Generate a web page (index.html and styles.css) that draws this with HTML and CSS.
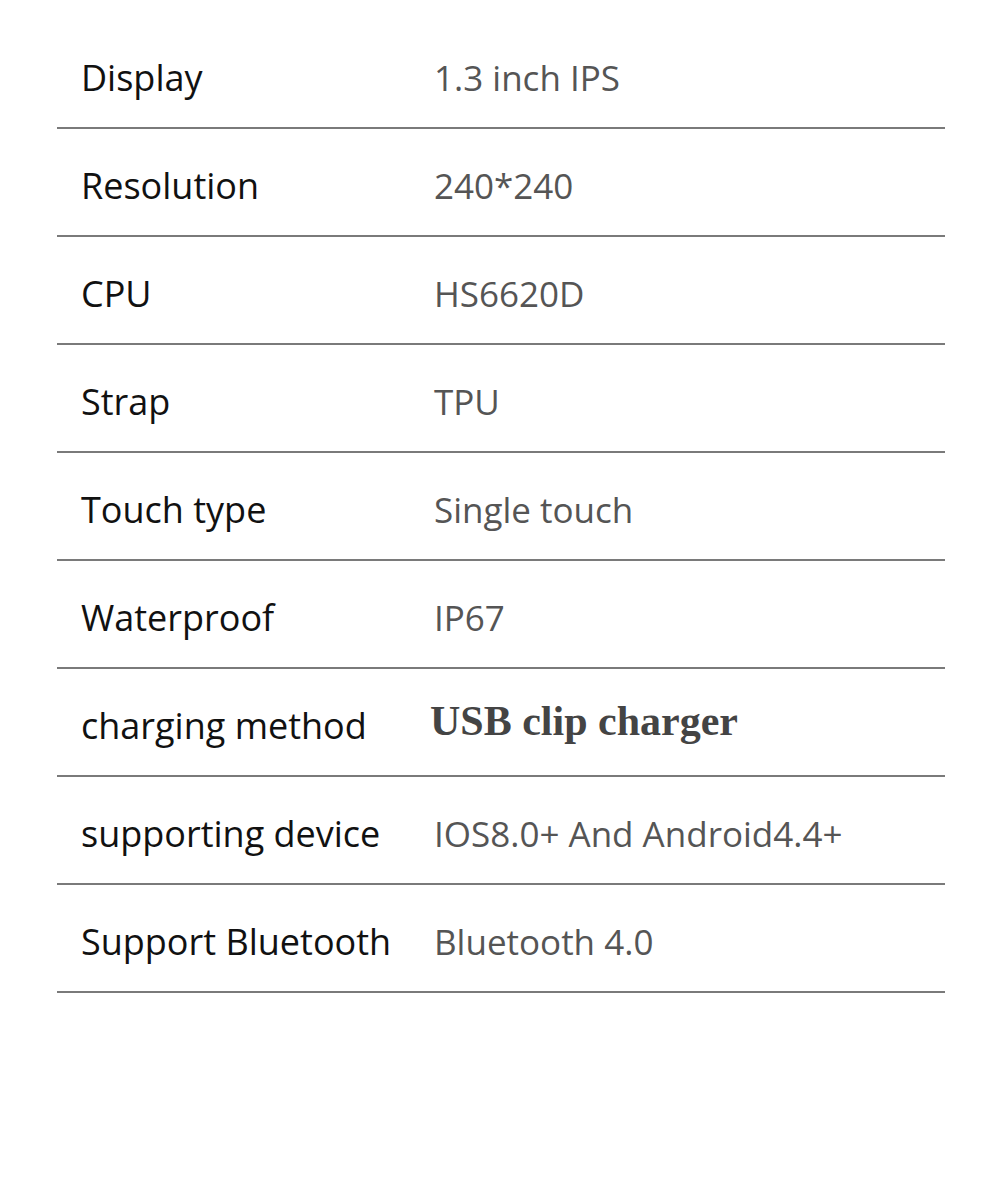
FILE: index.html
```html
<!DOCTYPE html>
<html>
<head>
<meta charset="utf-8">
<link rel="stylesheet" href="styles.css">
</head>
<body>
<div class="specs">
  <div class="row"><span class="key">Display</span><span class="val">1.3 inch IPS</span></div>
  <div class="row"><span class="key">Resolution</span><span class="val">240*240</span></div>
  <div class="row"><span class="key">CPU</span><span class="val">HS6620D</span></div>
  <div class="row"><span class="key">Strap</span><span class="val">TPU</span></div>
  <div class="row"><span class="key">Touch type</span><span class="val">Single touch</span></div>
  <div class="row"><span class="key">Waterproof</span><span class="val">IP67</span></div>
  <div class="row"><span class="key">charging method</span><span class="val serif">USB clip charger</span></div>
  <div class="row"><span class="key">supporting device</span><span class="val">IOS8.0+ And Android4.4+</span></div>
  <div class="row"><span class="key">Support Bluetooth</span><span class="val">Bluetooth 4.0</span></div>
</div>
</body>
</html>
```
FILE: styles.css
```css
html, body {
  margin: 0;
  padding: 0;
  background: #ffffff;
}
body {
  width: 1000px;
  height: 1203px;
  overflow: hidden;
  font-family: "Open Sans", "Liberation Sans", sans-serif;
}
.specs {
  margin: 21px 55px 0 57px;
  display: flex;
  flex-direction: column;
}
.row {
  box-sizing: border-box;
  height: 108px;
  padding-top: 6px;
  border-bottom: 2px solid #7a7a7a;
  display: flex;
  align-items: center;
}
.key {
  width: 353px;
  padding-left: 24px;
  font-size: 36px;
  color: #111111;
}
.val {
  font-size: 35px;
  color: #555555;
}
.serif {
  font-family: "Liberation Serif", serif;
  font-weight: bold;
  font-size: 42px;
  color: #444444;
  margin-left: -4px;
  margin-top: -8px;
}
```
